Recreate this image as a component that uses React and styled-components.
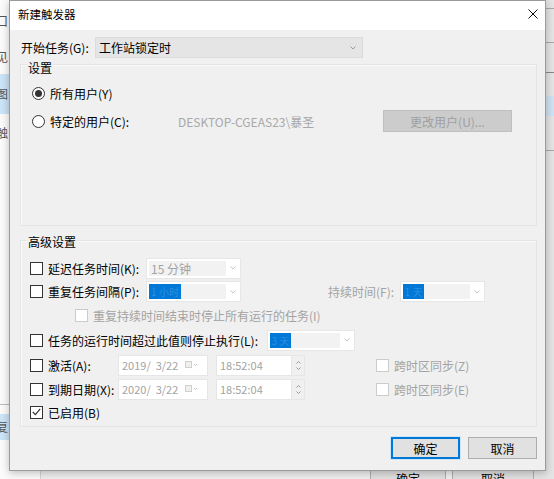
import React from "react"
import styled, { createGlobalStyle } from "styled-components"

const GlobalStyle = createGlobalStyle`
  html, body {
    margin: 0;
    padding: 0;
    background: #f0f0f0;
  }
  body {
    font-family: "Noto Sans CJK SC", "Noto Sans", sans-serif;
    font-size: 12px;
    color: #000;
  }
`

const Desktop = styled.div`
  position: relative;
  width: 554px;
  height: 479px;
  overflow: hidden;
  background: #f0f0f0;
`

// window behind the dialog
const BackLeft = styled.div`
  position: absolute;
  left: 0;
  top: 0;
  width: 40px;
  height: 479px;
  background: #fbfbfb;
  border-right: 1px solid #d5d5d5;
`

const BackItem = styled.div`
  position: absolute;
  left: -4px;
  top: ${props => props.top}px;
  width: 40px;
  height: ${props => props.h || 18}px;
  line-height: ${props => props.h || 18}px;
  font-size: 12px;
  color: #555;
  background: ${props => (props.selected ? "#cce4f7" : "transparent")};
  border-top: ${props => (props.line ? "1px solid #bdbdbd" : "none")};
`

const BackRight = styled.div`
  position: absolute;
  right: 0;
  top: 0;
  width: 20px;
  height: 479px;
  background: #e4e4e4;
  border-left: 1px solid #b8b8b8;
`

const BackLine = styled.div`
  position: absolute;
  left: 0;
  right: 0;
  top: ${props => props.top}px;
  height: ${props => props.h || 1}px;
  background: ${props => props.color || "#a9a9a9"};
`

const BackButton = styled.div`
  position: absolute;
  top: 466px;
  left: ${props => props.left}px;
  width: ${props => props.w}px;
  height: 24px;
  box-sizing: border-box;
  background: #e1e1e1;
  border: 1px solid #adadad;
  text-align: center;
  line-height: 20px;
  font-size: 12px;
  padding-top: 2px;
`

// dialog
const Dialog = styled.div`
  position: absolute;
  left: 9px;
  top: 0;
  width: 537px;
  height: 471px;
  box-sizing: border-box;
  border: 1px solid #9b9b9b;
  background: #f0f0f0;
  box-shadow: 0 2px 8px rgba(0, 0, 0, 0.25);
  display: flex;
  flex-direction: column;
`

const TitleBar = styled.div`
  height: 29px;
  flex: none;
  background: #fff;
  display: flex;
  align-items: center;
  justify-content: space-between;
  padding: 0 7px 3px 8px;
  box-sizing: border-box;
`

const Title = styled.span`
  font-size: 11.5px;
  color: #000;
`

const Body = styled.div`
  flex: 1;
  display: flex;
  flex-direction: column;
`

const StartRow = styled.div`
  display: flex;
  align-items: center;
  height: 21px;
  margin: 7px 0 0 11px;
`

const Label = styled.span`
  flex: none;
  width: ${props => (props.w ? `${props.w}px` : "auto")};
  margin-left: ${props => props.ml || 0}px;
  color: ${props => (props.disabled ? "#a3a3a3" : "#000")};
  white-space: nowrap;
  font-size: 12px;
`

const Select = styled.div`
  flex: none;
  width: ${props => props.w}px;
  height: 21px;
  box-sizing: border-box;
  background: #e5e5e5;
  border: 1px solid #dcdcdc;
  display: flex;
  align-items: center;
  justify-content: space-between;
  padding: 0 6px 0 3px;
  font-size: 12px;
`

const Group = styled.div`
  margin: ${props => props.mt}px 8px 0 10px;
  height: ${props => props.h}px;
  box-sizing: border-box;
  border: 1px solid #e5e5e5;
  box-shadow: inset 1px 1px 0 #fafafa;
  display: flex;
  flex-direction: column;
`

const Caption = styled.div`
  margin: ${props => props.mt}px 0 0 6px;
  height: 16px;
  line-height: 16px;
  font-size: 12px;
  padding: 0 1px;
  align-self: flex-start;
  background: #f0f0f0;
`

const Row = styled.div`
  display: flex;
  align-items: center;
  height: ${props => props.h}px;
  margin-top: ${props => props.mt || 0}px;
  padding-left: ${props => props.pl || 0}px;
  flex: none;
`

const Radio = styled.span`
  flex: none;
  width: 13px;
  height: 13px;
  box-sizing: border-box;
  border-radius: 50%;
  border: 1px solid #333;
  background: #fff;
  margin-right: 5px;
  display: flex;
  align-items: center;
  justify-content: center;
  &::after {
    content: "";
    width: 7px;
    height: 7px;
    border-radius: 50%;
    background: ${props => (props.checked ? "#333" : "transparent")};
  }
`

const Check = styled.span`
  flex: none;
  width: 13px;
  height: 13px;
  box-sizing: border-box;
  border: 1px solid ${props => (props.disabled ? "#cccccc" : "#333")};
  background: #fff;
  margin-right: 5px;
  display: flex;
  align-items: center;
  justify-content: center;
`

const Option = styled.div`
  flex: none;
  display: flex;
  align-items: center;
  width: ${props => (props.w ? `${props.w}px` : "auto")};
  margin-left: ${props => props.ml || 0}px;
  white-space: nowrap;
  color: ${props => (props.disabled ? "#a3a3a3" : "#000")};
`

const Muted = styled.span`
  flex: none;
  width: ${props => props.w}px;
  color: #a8a8a8;
  white-space: nowrap;
`

const PlainButton = styled.div`
  flex: none;
  width: ${props => props.w}px;
  height: 22px;
  box-sizing: border-box;
  background: ${props => (props.disabled ? "#cccccc" : "#e1e1e1")};
  border: ${props =>
    props.primary ? "2px solid #0078d7" : `1px solid ${props.disabled ? "#bfbfbf" : "#adadad"}`};
  box-shadow: ${props => (props.primary ? "0 0 0 1px #cde6fa" : "none")};
  color: ${props => (props.disabled ? "#a0a0a0" : "#000")};
  display: flex;
  align-items: center;
  justify-content: center;
  font-size: 12px;
`

const Combo = styled.div`
  flex: none;
  width: ${props => props.w}px;
  height: 21px;
  box-sizing: border-box;
  border: 1px solid #e6e6e6;
  background: #fff;
  padding: 2px 0 2px 2px;
  display: flex;
`

const ComboValue = styled.div`
  flex: 1;
  background: #f2f2f2;
  display: flex;
  align-items: center;
  color: #a3a3a3;
  font-size: 12px;
  padding-left: ${props => (props.pad ? 2 : 0)}px;
`

const Highlight = styled.span`
  width: ${props => props.w}px;
  height: 100%;
  background: #0078d7;
  color: rgba(255, 255, 255, 0.18);
  font-size: 10px;
  display: flex;
  align-items: center;
  justify-content: center;
`

const ComboArrow = styled.div`
  width: 14px;
  flex: none;
  display: flex;
  align-items: center;
  justify-content: center;
`

const Field = styled.div`
  flex: none;
  width: ${props => props.w}px;
  height: 21px;
  box-sizing: border-box;
  border: 1px solid #e6e6e6;
  background: #fff;
  margin-left: ${props => props.ml || 0}px;
  display: flex;
  align-items: center;
  justify-content: space-between;
  padding-left: 3px;
  color: #a3a3a3;
  font-size: 11px;
  white-space: pre;
`

const Spin = styled.div`
  width: 12px;
  height: 100%;
  background: #f0f0f0;
  border-left: 1px solid #e6e6e6;
  display: flex;
  flex-direction: column;
  align-items: center;
  justify-content: center;
  gap: 3px;
`

const Footer = styled.div`
  display: flex;
  justify-content: flex-end;
  gap: 8px;
  margin: 10px 8px 0 0;
`

const Chevron = ({ color = "#9a9a9a" }) => (
  <svg width="6" height="4" viewBox="0 0 6 4">
    <path d="M0.5 0.5 L3 3 L5.5 0.5" fill="none" stroke={color} strokeWidth="1" />
  </svg>
)

const TickMark = () => (
  <svg width="9" height="8" viewBox="0 0 9 8">
    <path d="M0.8 4 L3.4 6.6 L8.2 0.8" fill="none" stroke="#333" strokeWidth="1.2" />
  </svg>
)

const CalendarIcon = () => (
  <svg width="14" height="8" viewBox="0 0 14 8" style={{ marginRight: 8 }}>
    <rect x="0.5" y="0.5" width="6" height="6" fill="#f0f0f0" stroke="#d0d0d0" />
    <path d="M9 3 L10.5 4.5 L12 3" fill="none" stroke="#c0c0c0" />
  </svg>
)

const SpinArrows = () => (
  <Spin>
    <svg width="5" height="3" viewBox="0 0 5 3">
      <path d="M0.5 2.5 L2.5 0.5 L4.5 2.5" fill="none" stroke="#9a9a9a" />
    </svg>
    <svg width="5" height="3" viewBox="0 0 5 3">
      <path d="M0.5 0.5 L2.5 2.5 L4.5 0.5" fill="none" stroke="#9a9a9a" />
    </svg>
  </Spin>
)

const CloseIcon = () => (
  <svg width="10" height="10" viewBox="0 0 10 10">
    <path d="M0.5 0.5 L9.5 9.5 M9.5 0.5 L0.5 9.5" stroke="#111" strokeWidth="1" />
  </svg>
)

function DisabledCombo({ w, value, mark }) {
  return (
    <Combo w={w}>
      <ComboValue pad={!mark}>
        {mark ? <Highlight w={mark}>{value}</Highlight> : value}
      </ComboValue>
      <ComboArrow>
        <Chevron color="#c4c4c4" />
      </ComboArrow>
    </Combo>
  )
}

function CheckOption({ w, ml, checked, disabled, children }) {
  return (
    <Option w={w} ml={ml} disabled={disabled}>
      <Check disabled={disabled}>{checked && <TickMark />}</Check>
      {children}
    </Option>
  )
}

export default function App() {
  return (
    <Desktop>
      <GlobalStyle />

      <BackLeft>
        <BackItem top={12}>口</BackItem>
        <BackItem top={48}>见</BackItem>
        <BackItem top={74} h={40} selected>
          图
        </BackItem>
        <BackItem top={124}>触</BackItem>
        <BackItem top={404} line h={1} />
        <BackItem top={414} h={26} selected>
          复
        </BackItem>
      </BackLeft>

      <BackRight>
        <BackLine top={8} />
        <BackLine top={42} />
        <BackLine top={72} color="#888" />
        <BackLine top={96} h={20} color="#cfe1f2" />
        <BackLine top={150} />
      </BackRight>

      <BackButton left={370} w={76}>
        确定
      </BackButton>
      <BackButton left={452} w={82}>
        取消
      </BackButton>

      <Dialog>
        <TitleBar>
          <Title>新建触发器</Title>
          <CloseIcon />
        </TitleBar>

        <Body>
          <StartRow>
            <Label w={74}>开始任务(G):</Label>
            <Select w={268}>
              工作站锁定时
              <Chevron />
            </Select>
          </StartRow>

          <Group mt={6} h={162}>
            <Caption mt={-5}>设置</Caption>
            <Row h={22} mt={6} pl={11}>
              <Option>
                <Radio checked />
                所有用户(Y)
              </Option>
            </Row>
            <Row h={22} mt={6} pl={11}>
              <Option w={146}>
                <Radio />
                特定的用户(C):
              </Option>
              <Muted w={205}>DESKTOP-CGEAS23\暴圣</Muted>
              <PlainButton w={129} disabled>
                更改用户(U)...
              </PlainButton>
            </Row>
          </Group>

          <Group mt={14} h={187}>
            <Caption mt={-7}>高级设置</Caption>
            <Row h={24} mt={6} pl={9}>
              <CheckOption w={116}>延迟任务时间(K):</CheckOption>
              <DisabledCombo w={95} value="15 分钟" />
            </Row>
            <Row h={23} pl={9}>
              <CheckOption w={116}>重复任务间隔(P):</CheckOption>
              <DisabledCombo w={95} value="1 小时" mark={32} />
              <Label w={72} ml={87} disabled>
                持续时间(F):
              </Label>
              <DisabledCombo w={85} value="1 天" mark={21} />
            </Row>
            <Row h={24} pl={9}>
              <CheckOption ml={45} disabled>
                重复持续时间结束时停止所有运行的任务(I)
              </CheckOption>
            </Row>
            <Row h={26} pl={9}>
              <CheckOption w={237}>任务的运行时间超过此值则停止执行(L):</CheckOption>
              <DisabledCombo w={88} value="3 天" mark={21} />
            </Row>
            <Row h={24} pl={9}>
              <CheckOption w={88}>激活(A):</CheckOption>
              <Field w={90}>
                2019/  3/22
                <CalendarIcon />
              </Field>
              <Field w={89} ml={8}>
                18:52:04
                <SpinArrows />
              </Field>
              <CheckOption ml={71} disabled>
                跨时区同步(Z)
              </CheckOption>
            </Row>
            <Row h={24} pl={9}>
              <CheckOption w={88}>到期日期(X):</CheckOption>
              <Field w={90}>
                2020/  3/22
                <CalendarIcon />
              </Field>
              <Field w={89} ml={8}>
                18:52:04
                <SpinArrows />
              </Field>
              <CheckOption ml={71} disabled>
                跨时区同步(E)
              </CheckOption>
            </Row>
            <Row h={22} pl={9}>
              <CheckOption checked>已启用(B)</CheckOption>
            </Row>
          </Group>

          <Footer>
            <PlainButton w={69} primary>
              确定
            </PlainButton>
            <PlainButton w={69}>取消</PlainButton>
          </Footer>
        </Body>
      </Dialog>
    </Desktop>
  )
}
